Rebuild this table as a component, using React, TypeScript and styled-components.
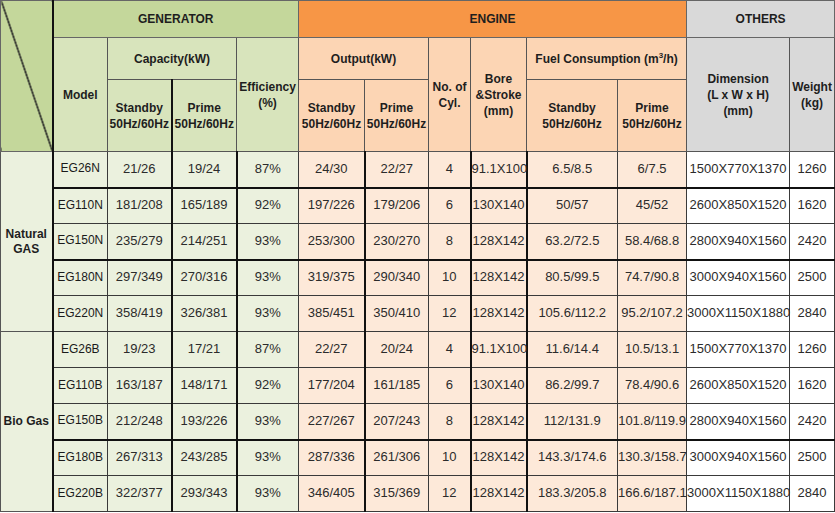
import React from 'react';
import styled, { createGlobalStyle, css } from 'styled-components';

const Global = createGlobalStyle`
  html, body { margin: 0; padding: 0; background: #ffffff; }
  body { font-family: "Liberation Sans", Arial, sans-serif; }
`;

type Tone = 'gen' | 'eng' | 'oth';

const topBg: Record<Tone, string> = { gen: '#c4d79b', eng: '#f79646', oth: '#d9d9d9' };
const subBg: Record<Tone, string> = { gen: '#d8e4bc', eng: '#fcd5b4', oth: '#d9d9d9' };
const dataBg: Record<Tone, string> = { gen: '#ebf1de', eng: '#fde9d9', oth: '#ffffff' };

const Sheet = styled.table`
  width: 834px;
  table-layout: fixed;
  border-collapse: collapse;
  font-family: "Liberation Sans", Arial, sans-serif;
  color: #262626;
`;

const HeadRow = styled.tr<{ $h: number }>`
  height: ${(p) => p.$h}px;
`;

const DataRow = styled.tr<{ $strongTop?: boolean }>`
  height: 36px;
  ${(p) =>
    p.$strongTop &&
    css`
      & > td {
        border-top: 2px solid #111;
      }
    `}
`;

const TopHead = styled.th<{ $tone: Tone }>`
  background: ${(p) => topBg[p.$tone]};
  border: 1px solid #666;
  font-size: 12px;
  font-weight: bold;
  color: #1e1e1e;
  text-align: center;
  vertical-align: middle;
  padding: 0;
`;

const SubHead = styled.th<{ $tone: Tone; $strongLeft?: boolean }>`
  background: ${(p) => subBg[p.$tone]};
  border: 1px solid #555;
  ${(p) => p.$strongLeft && css`border-left: 2px solid #111;`}
  font-size: 12px;
  line-height: 16px;
  font-weight: bold;
  color: #1e1e1e;
  text-align: center;
  vertical-align: middle;
  padding: 0;
  white-space: nowrap;
`;

const Corner = styled.th`
  background: #c4d79b
    linear-gradient(
      to top right,
      transparent calc(50% - 1px),
      #222 calc(50% - 0.5px),
      #222 calc(50% + 0.5px),
      transparent calc(50% + 1px)
    );
  border: 1px solid #666;
  border-right: 2px solid #111;
  padding: 0;
`;

const GroupCell = styled.td`
  background: #ebf1de;
  border: 1px solid #555;
  border-right: 2px solid #111;
  font-size: 12px;
  line-height: 15px;
  font-weight: bold;
  color: #1e1e1e;
  text-align: center;
  vertical-align: middle;
  padding: 0;
  white-space: nowrap;
`;

const Cell = styled.td<{ $tone: Tone; $strongLeft?: boolean; $model?: boolean }>`
  background: ${(p) => dataBg[p.$tone]};
  border: 1px solid #3a3a3a;
  ${(p) => p.$strongLeft && css`border-left: 2px solid #111;`}
  font-size: ${(p) => (p.$model ? '12px' : '13px')};
  color: ${(p) => (p.$model ? '#1a1a1a' : '#2b2b2b')};
  text-align: center;
  vertical-align: middle;
  padding: 0 0 2px;
  white-space: nowrap;
  overflow: visible;
`;

const Sup = styled.sup`
  font-size: 8px;
  vertical-align: 5px;
  line-height: 0;
`;

const widths = [52, 55, 64, 65, 62, 66, 64, 42, 56, 91, 69, 103, 45];
const tones: Tone[] = ['gen', 'gen', 'gen', 'gen', 'gen', 'eng', 'eng', 'eng', 'eng', 'eng', 'eng', 'oth', 'oth'];
const strongLeft = [false, true, false, true, true, false, true, false, true, true, false, false, false];

type Row = string[];

const natural: Row[] = [
  ['EG26N', '21/26', '19/24', '87%', '24/30', '22/27', '4', '91.1X100', '6.5/8.5', '6/7.5', '1500X770X1370', '1260'],
  ['EG110N', '181/208', '165/189', '92%', '197/226', '179/206', '6', '130X140', '50/57', '45/52', '2600X850X1520', '1620'],
  ['EG150N', '235/279', '214/251', '93%', '253/300', '230/270', '8', '128X142', '63.2/72.5', '58.4/68.8', '2800X940X1560', '2420'],
  ['EG180N', '297/349', '270/316', '93%', '319/375', '290/340', '10', '128X142', '80.5/99.5', '74.7/90.8', '3000X940X1560', '2500'],
  ['EG220N', '358/419', '326/381', '93%', '385/451', '350/410', '12', '128X142', '105.6/112.2', '95.2/107.2', '3000X1150X1880', '2840'],
];

const bio: Row[] = [
  ['EG26B', '19/23', '17/21', '87%', '22/27', '20/24', '4', '91.1X100', '11.6/14.4', '10.5/13.1', '1500X770X1370', '1260'],
  ['EG110B', '163/187', '148/171', '92%', '177/204', '161/185', '6', '130X140', '86.2/99.7', '78.4/90.6', '2600X850X1520', '1620'],
  ['EG150B', '212/248', '193/226', '93%', '227/267', '207/243', '8', '128X142', '112/131.9', '101.8/119.9', '2800X940X1560', '2420'],
  ['EG180B', '267/313', '243/285', '93%', '287/336', '261/306', '10', '128X142', '143.3/174.6', '130.3/158.7', '3000X940X1560', '2500'],
  ['EG220B', '322/377', '293/343', '93%', '346/405', '315/369', '12', '128X142', '183.3/205.8', '166.6/187.1', '3000X1150X1880', '2840'],
];

const strongRows = new Set(['EG110N', 'EG180N', 'EG180B']);

function DataCells({ row }: { row: Row }) {
  return (
    <>
      {row.map((v, i) => (
        <Cell key={i} $tone={tones[i + 1]} $strongLeft={strongLeft[i + 1]} $model={i === 0}>
          {v}
        </Cell>
      ))}
    </>
  );
}

function Group({ label, rows }: { label: React.ReactNode; rows: Row[] }) {
  return (
    <>
      {rows.map((r, idx) => (
        <DataRow key={r[0]} $strongTop={strongRows.has(r[0])}>
          {idx === 0 && <GroupCell rowSpan={rows.length}>{label}</GroupCell>}
          <DataCells row={r} />
        </DataRow>
      ))}
    </>
  );
}

export default function App() {
  return (
    <>
      <Global />
      <Sheet>
        <colgroup>
          {widths.map((w, i) => (
            <col key={i} style={{ width: w }} />
          ))}
        </colgroup>
        <thead>
          <HeadRow $h={37}>
            <Corner rowSpan={3} />
            <TopHead $tone="gen" colSpan={4}>GENERATOR</TopHead>
            <TopHead $tone="eng" colSpan={6}>ENGINE</TopHead>
            <TopHead $tone="oth" colSpan={2}>OTHERS</TopHead>
          </HeadRow>
          <HeadRow $h={42}>
            <SubHead $tone="gen" rowSpan={2} $strongLeft>Model</SubHead>
            <SubHead $tone="gen" colSpan={2}>Capacity(kW)</SubHead>
            <SubHead $tone="gen" rowSpan={2}>Efficiency<br />(%)</SubHead>
            <SubHead $tone="eng" colSpan={2}>Output(kW)</SubHead>
            <SubHead $tone="eng" rowSpan={2}>No. of<br />Cyl.</SubHead>
            <SubHead $tone="eng" rowSpan={2}>Bore<br />&amp;Stroke<br />(mm)</SubHead>
            <SubHead $tone="eng" colSpan={2}>
              Fuel Consumption (m<Sup>3</Sup>/h)
            </SubHead>
            <SubHead $tone="oth" rowSpan={2}>Dimension<br />(L x W x H)<br />(mm)</SubHead>
            <SubHead $tone="oth" rowSpan={2}>Weight<br />(kg)</SubHead>
          </HeadRow>
          <HeadRow $h={72}>
            <SubHead $tone="gen">Standby<br />50Hz/60Hz</SubHead>
            <SubHead $tone="gen" $strongLeft>Prime<br />50Hz/60Hz</SubHead>
            <SubHead $tone="eng">Standby<br />50Hz/60Hz</SubHead>
            <SubHead $tone="eng">Prime<br />50Hz/60Hz</SubHead>
            <SubHead $tone="eng">Standby<br />50Hz/60Hz</SubHead>
            <SubHead $tone="eng">Prime<br />50Hz/60Hz</SubHead>
          </HeadRow>
        </thead>
        <tbody>
          <Group label={<>Natural<br />GAS</>} rows={natural} />
          <Group label="Bio Gas" rows={bio} />
        </tbody>
      </Sheet>
    </>
  );
}
